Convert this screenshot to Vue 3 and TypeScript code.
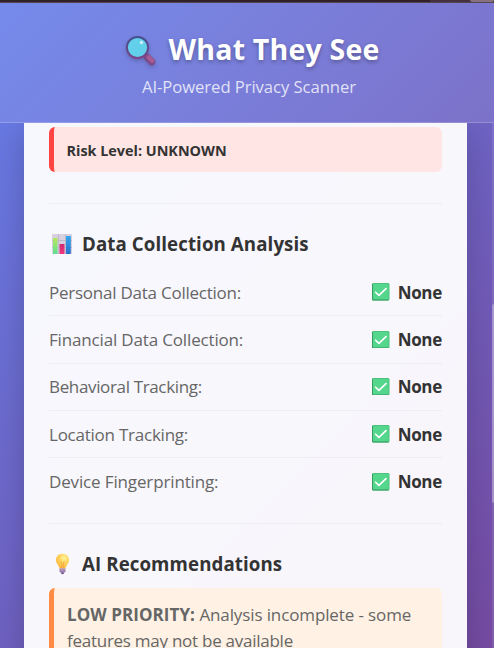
<script setup lang="ts">
const rows: string[] = [
  'Personal Data Collection:',
  'Financial Data Collection:',
  'Behavioral Tracking:',
  'Location Tracking:',
  'Device Fingerprinting:',
]
</script>

<template>
  <div class="popup">
    <div class="browser-edge"><span class="edge-shade"></span><span class="edge-pill"></span></div>
    <header class="header">
      <h1 class="title">
        <svg class="magnifier" viewBox="0 0 34 36" aria-hidden="true">
          <defs>
            <linearGradient id="rim" x1="0" y1="0" x2="0" y2="1">
              <stop offset="0" stop-color="#42508f" />
              <stop offset="1" stop-color="#7c4488" />
            </linearGradient>
          </defs>
          <path d="M19 20l4 4" stroke="#69417e" stroke-width="3.5" />
          <path d="M22.300 23.300l4.500 4.500" stroke="#7d4787" stroke-width="7" stroke-linecap="round" />
          <path d="M23.700 23.300l3.500 3.500" stroke="#a55c94" stroke-width="4.500" stroke-linecap="round" />
          <circle cx="12.500" cy="13.500" r="10.600" fill="#62cfeb" stroke="url(#rim)" stroke-width="2" />
          <circle cx="16.500" cy="8.500" r="1.800" fill="#c9edfa" />
        </svg>
        <span class="title-text">What They See</span>
      </h1>
      <p class="subtitle">AI-Powered Privacy Scanner</p>
    </header>
    <main class="content">
      <article class="card">
        <div class="risk"><span>Risk Level: UNKNOWN</span></div>
        <section class="section analysis">
          <h2 class="heading">
            <svg class="heading-icon" viewBox="0 0 22 22" aria-hidden="true">
              <defs>
                <linearGradient id="g1" x2="0" y2="1"><stop stop-color="#b7e85b" /><stop offset="1" stop-color="#5cdf91" /></linearGradient>
                <linearGradient id="g2" x2="0" y2="1"><stop stop-color="#cc2c72" /><stop offset="1" stop-color="#f3387e" /></linearGradient>
                <linearGradient id="g3" x2="0" y2="1"><stop stop-color="#31a7ed" /><stop offset="1" stop-color="#2d72cc" /></linearGradient>
              </defs>
              <rect x="1" y="1" width="20" height="20" rx="1" fill="#d7d0df" />
              <path d="M1 7.5h20M1 14.5h20M7.5 1v20M14.5 1v20" stroke="#bcb2c7" stroke-width=".8" />
              <rect x="2" y="5" width="4.5" height="16" fill="url(#g1)" />
              <rect x="8.5" y="11" width="5" height="10" fill="url(#g2)" />
              <rect x="15" y="3" width="4.8" height="18" fill="url(#g3)" />
            </svg>
            <span class="heading-data">Data Collection Analysis</span>
          </h2>
          <div class="rows">
            <div v-for="(row, i) in rows" :key="row" class="row">
              <span class="label" :class="`label-${i}`">{{ row }}</span>
              <span class="value">
                <svg class="check" viewBox="0 0 18 18" aria-hidden="true">
                  <rect x=".5" y=".5" width="17" height="17" rx=".6" fill="#54d68c" stroke="#4abf7b" />
                  <path d="M.5 1v16.500h16.500" fill="none" stroke="#399b63" />
                  <path d="M3.700 9.500l3.400 3.200 7.300-7" fill="none" stroke="#fff" stroke-width="1.700" stroke-linecap="round" stroke-linejoin="round" />
                </svg>
                <strong>None</strong>
              </span>
            </div>
          </div>
        </section>
        <section class="section">
          <h2 class="heading">
            <svg class="heading-icon" viewBox="0 0 22 22" aria-hidden="true">
              <defs>
                <radialGradient id="bulb" cx=".62" cy=".3" r=".7"><stop stop-color="#fff3a0" /><stop offset=".5" stop-color="#ffd45b" /><stop offset="1" stop-color="#fbb53f" /></radialGradient>
              </defs>
              <path d="M11.500.800c-3.800 0-6.500 2.800-6.500 6.200 0 3.800 3 4.800 3.500 8.500h6c.5-3.700 3.500-4.700 3.500-8.500 0-3.400-2.700-6.200-6.500-6.200z" fill="url(#bulb)" />
              <path d="M9.500 8l1.200 2v5M13.500 8l-1.200 2v5" fill="none" stroke="#f5a43c" stroke-width=".8" />
              <path d="M8.500 15.500h6v3L13 20h-3l-1.500-1.500z" fill="#9b7cae" />
              <path d="M8.500 17h6" stroke="#c8b7d2" stroke-width=".7" />
              <path d="M10.300 20.500h2.400" stroke="#634c78" stroke-width="1.200" />
            </svg>
            <span class="heading-ai">AI Recommendations</span>
          </h2>
          <div class="recommendation">
            <div class="rec-first"><strong>LOW PRIORITY:</strong> <span>Analysis incomplete - some</span></div>
            <div class="rec-second">features may not be available</div>
          </div>
        </section>
      </article>
    </main>
    <div class="scrollbar"><span class="thumb"></span></div>
  </div>
</template>

<style>
body {
  overflow: hidden;
}
</style>

<style scoped>
.popup {
  position: relative;
  box-sizing: border-box;
  width: 494px;
  height: 648px;
  overflow: hidden;
  color: #333;
  background: linear-gradient(135deg, #667eea 0%, #764ba2 100%);
  font-family: "Open Sans", "Noto Sans", sans-serif;
}

.popup * {
  box-sizing: border-box;
}

.browser-edge {
  display: flex;
  justify-content: flex-end;
  height: 3px;
  background: #302029;
  border-bottom: 1px solid #55464f;
}

.edge-shade {
  width: 40px;
  height: 2px;
  background: #443041;
}

.edge-pill {
  width: 24px;
  height: 2px;
  background: #85727e;
  border-radius: 0 0 8px 8px;
}

.header {
  display: flex;
  flex-direction: column;
  align-items: center;
  height: 120px;
  padding-top: 27px;
  background: rgba(255, 255, 255, .1);
  border-bottom: 1px solid rgba(255, 255, 255, .2);
}

.title {
  display: flex;
  align-items: center;
  height: 40px;
  margin: 0;
  padding-left: 10px;
  color: #fff;
  font-size: 28.5px;
  line-height: 38px;
  text-shadow: 0 2px 4px rgba(0, 0, 0, .3);
}

.magnifier {
  width: 34px;
  height: 36px;
  margin: 3px 10px 0 0;
  overflow: visible;
  filter: drop-shadow(0 2px 2px rgba(0, 0, 0, .2));
}

.title-text {
  height: 40px;
  letter-spacing: .2px;
}

.subtitle {
  margin: 4px 0 0;
  padding-left: 4px;
  color: rgba(255, 255, 255, .79);
  font-size: 16.7px;
  line-height: 25px;
  letter-spacing: -.08px;
  white-space: nowrap;
}

.content {
  height: 525px;
  overflow: hidden;
  padding: 0 27px 0 24px;
}

.card {
  height: 570px;
  padding: 4px 25px 0;
  background: rgba(255, 255, 255, .95);
  box-shadow: 0 8px 32px rgba(0, 0, 0, .2);
}

.risk {
  display: flex;
  align-items: center;
  height: 45px;
  padding: 2px 0 0 12.5px;
  background: #ffe5e4;
  border-left: 5px solid #ff4444;
  border-radius: 6px;
  font-size: 14.4px;
  font-weight: 700;
}

.section {
  padding-top: 28px;
  border-top: 1px solid #eeeef2;
}

.analysis {
  height: 320px;
  margin-top: 31px;
}

.heading {
  display: flex;
  align-items: center;
  gap: 9px;
  height: 24px;
  margin: 0;
  padding-left: 2px;
  font-size: 18.7px;
  line-height: 24px;
  white-space: nowrap;
}

.heading-data,
.heading-ai {
  letter-spacing: .09px;
}

.heading-icon {
  width: 22px;
  height: 22px;
}

.rows {
  padding-top: 13px;
}

.row {
  display: flex;
  align-items: center;
  justify-content: space-between;
  height: 47.3px;
  border-bottom: 1px solid #eeeef2;
  font-size: 17px;
}

.row:last-child {
  border-bottom: 0;
}

.label {
  color: #666;
  letter-spacing: -.24px;
}

.label-1 {
  letter-spacing: -.16px;
}

.label-2 {
  letter-spacing: -.35px;
}

.label-4 {
  letter-spacing: -.14px;
}

.value {
  display: flex;
  align-items: center;
  gap: 8px;
  letter-spacing: -.3px;
}

.check {
  width: 17.5px;
  height: 17.5px;
}

.recommendation {
  height: 90px;
  margin-top: 12px;
  padding: 14px 0 0 13px;
  color: #666;
  background: #fff2e4;
  border-left: 5px solid #ff8c42;
  border-radius: 6px;
  font-size: 17px;
  line-height: 26px;
  white-space: nowrap;
}

.rec-first strong {
  letter-spacing: .06px;
}

.rec-first span {
  letter-spacing: -.12px;
}

.rec-second {
  letter-spacing: -.26px;
}

.scrollbar {
  position: absolute;
  top: 123px;
  right: 0;
  width: 2px;
  height: 525px;
  padding-top: 181px;
  background: rgba(255, 255, 255, .1);
}

.thumb {
  display: block;
  height: 199px;
  background: rgba(255, 255, 255, .3);
  border-radius: 2px 0 0 2px;
}
</style>
